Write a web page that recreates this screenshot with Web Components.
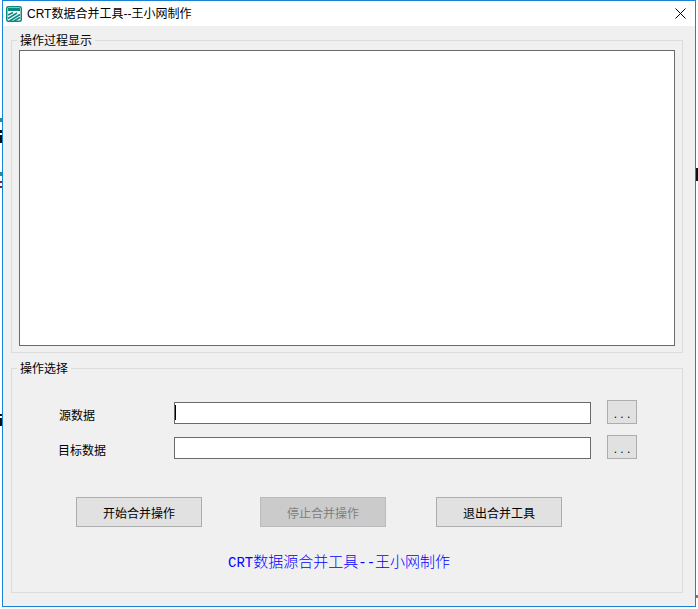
<!DOCTYPE html>
<html lang="zh">
<head>
<meta charset="utf-8">
<title>CRT数据合并工具</title>
<style>
    html, body { margin: 0; height: 100%; background: #fff; }
    body {
        font: 12px "Liberation Sans", "Noto Sans CJK SC", sans-serif;
        color: #000;
        overflow: hidden;
    }
</style>
</head>
<body>
<desktop-scraps></desktop-scraps>
<app-window>
    <title-bar>CRT数据合并工具--王小网制作</title-bar>
    <group-box label="操作过程显示" class="log">
        <text-field multiline></text-field>
    </group-box>
    <group-box label="操作选择" class="pick">
        <field-row label="源数据" focused></field-row>
        <field-row label="目标数据"></field-row>
        <action-row>
            <win-button>开始合并操作</win-button>
            <win-button disabled>停止合并操作</win-button>
            <win-button>退出合并工具</win-button>
        </action-row>
        <credit-line></credit-line>
    </group-box>
</app-window>

<script>
// bits of the desktop that stick out beside the window
class DesktopScraps extends HTMLElement {
    constructor() {
        super();
        this.attachShadow({mode: "open"});
        const bits = [
            [0, 118, 2, 4, "#1a8f96"],
            [0, 130, 2, 3, "#111"],
            [0, 135, 2, 8, "#111"],
            [0, 172, 2, 4, "#1a8f96"],
            [0, 181, 2, 2, "#8a2030"],
            [0, 186, 2, 2, "#8a2030"],
            [0, 414, 2, 2, "#111"],
            [0, 418, 2, 8, "#111"],
            [696, 168, 2, 13, "#111"],
            [696, 595, 2, 3, "#777"]
        ];
        this.shadowRoot.innerHTML = /* html */`
        <style>
            :host { display: block; position: absolute; inset: 0; }
            i { position: absolute; }
        </style>
        ${bits.map(([x, y, w, h, c]) =>
            `<i style="left:${x}px;top:${y}px;width:${w}px;height:${h}px;background:${c}"></i>`).join("")}
        `;
    }
}

class AppWindow extends HTMLElement {
    constructor() {
        super();
        this.attachShadow({mode: "open"});
        this.shadowRoot.innerHTML = /* html */`
        <style>
            :host {
                display: flex;
                flex-direction: column;
                position: relative;
                box-sizing: border-box;
                width: 694px;
                height: 607px;
                margin-left: 2px;
                border: 1px solid #1883d7;
                background: #f0f0f0;
            }
            .body {
                flex: 1;
                display: flex;
                flex-direction: column;
                gap: 15px;
                padding: 14px 12px 13px 8px;
            }
        </style>
        <slot name="bar"></slot>
        <div class="body"><slot></slot></div>
        `;
    }

    connectedCallback() {
        const bar = this.querySelector("title-bar");
        if (bar) bar.slot = "bar";
    }
}

class TitleBar extends HTMLElement {
    constructor() {
        super();
        this.attachShadow({mode: "open"});
        this.shadowRoot.innerHTML = /* html */`
        <style>
            :host {
                display: flex;
                align-items: center;
                height: 25px;
                background: #fff;
                font-size: 12px;
            }
            .icon { margin: 0 5px 0 3px; flex: none; }
            .text { flex: 1; position: relative; top: -1px; }
            .close { margin-right: 9px; flex: none; }
        </style>
        <svg class="icon" width="16" height="16" viewBox="0 0 16 16">
            <rect x=".75" y=".75" width="14.5" height="14.5" rx="1.5" fill="#fff" stroke="#0b8a82" stroke-width="1.5"/>
            <rect x="2" y="2" width="12" height="3" fill="#0b8a82"/>
            <path d="M2 9 L7 6.5 M2 12.5 L11 7 M3.5 15 L14 8.5 M8 15 L14 11.5" stroke="#0b8a82" stroke-width="1.6" fill="none"/>
        </svg>
        <span class="text"><slot></slot></span>
        <svg class="close" width="11" height="11" viewBox="0 0 11 11">
            <path d="M.5 .5 L10.5 10.5 M10.5 .5 L.5 10.5" stroke="#000" stroke-width="1" fill="none"/>
        </svg>
        `;
    }
}

class GroupBox extends HTMLElement {
    constructor() {
        super();
        this.attachShadow({mode: "open"});
        this.shadowRoot.innerHTML = /* html */`
        <style>
            :host {
                display: flex;
                flex-direction: column;
                position: relative;
                box-sizing: border-box;
                border: 1px solid #dcdcdc;
            }
            :host(.log) { height: 313px; padding: 9px 7px 6px; }
            :host(.pick) { height: 225px; padding: 31px 0 0 46px; }
            .legend {
                position: absolute;
                top: -8px;
                left: 5px;
                padding: 0 3px;
                background: #f0f0f0;
                line-height: 16px;
            }
        </style>
        <span class="legend"></span>
        <slot></slot>
        `;
    }

    connectedCallback() {
        this.shadowRoot.querySelector(".legend").textContent = this.getAttribute("label");
    }
}

class TextField extends HTMLElement {
    constructor() {
        super();
        this.attachShadow({mode: "open"});
        this.shadowRoot.innerHTML = /* html */`
        <style>
            :host {
                display: block;
                box-sizing: border-box;
                height: 22px;
                background: #fff;
                border: 1px solid #6a6a6a;
                position: relative;
            }
            :host([multiline]) { flex: 1; height: auto; }
            :host([focused])::before {
                content: "";
                position: absolute;
                left: 0;
                top: 2px;
                width: 1px;
                height: 15px;
                background: #000;
            }
        </style>
        `;
    }
}

class WinButton extends HTMLElement {
    constructor() {
        super();
        this.attachShadow({mode: "open"});
        this.shadowRoot.innerHTML = /* html */`
        <style>
            :host {
                display: flex;
                align-items: center;
                justify-content: center;
                box-sizing: border-box;
                width: 126px;
                height: 30px;
                background: #e1e1e1;
                border: 1px solid #adadad;
                font-size: 12px;
            }
            :host([disabled]) {
                background: #cbcbcb;
                border-color: #bbb;
                color: #808080;
            }
            :host([small]) {
                width: 30px;
                height: 24px;
                align-items: flex-end;
                line-height: 18px;
            }
        </style>
        <slot></slot>
        `;
    }
}

class FieldRow extends HTMLElement {
    constructor() {
        super();
        this.attachShadow({mode: "open"});
        this.shadowRoot.innerHTML = /* html */`
        <style>
            :host {
                display: grid;
                grid-template-columns: 116px 417px 46px;
                align-items: end;
                height: 24px;
                margin-bottom: 11px;
            }
            .name { line-height: 16px; }
            :host([focused]) .name { padding-left: 1px; }
            win-button { margin-left: 16px; }
        </style>
        <span class="name"></span>
        <text-field></text-field>
        <win-button small>. . .</win-button>
        `;
    }

    connectedCallback() {
        this.shadowRoot.querySelector(".name").textContent = this.getAttribute("label");
        if (this.hasAttribute("focused")) {
            this.shadowRoot.querySelector("text-field").setAttribute("focused", "");
        }
    }
}

class ActionRow extends HTMLElement {
    constructor() {
        super();
        this.attachShadow({mode: "open"});
        this.shadowRoot.innerHTML = /* html */`
        <style>
            :host {
                display: flex;
                margin: 27px 0 0 18px;
            }
            ::slotted(win-button:nth-child(2)) { margin: 0 50px 0 58px; }
        </style>
        <slot></slot>
        `;
    }
}

class CreditLine extends HTMLElement {
    constructor() {
        super();
        this.attachShadow({mode: "open"});
        this.shadowRoot.innerHTML = /* html */`
        <style>
            :host {
                display: block;
                margin: 24px 0 0 170px;
                color: #0000ff;
                font: 15px/20px "Noto Sans CJK SC", sans-serif;
                font-weight: 300;
                white-space: nowrap;
            }
            .latin { font: 14px/20px "Liberation Mono", monospace; }
        </style>
        <span class="latin">CRT</span>数据源合并工具<span class="latin">--</span>王小网制作
        `;
    }
}

customElements.define("desktop-scraps", DesktopScraps);
customElements.define("app-window", AppWindow);
customElements.define("title-bar", TitleBar);
customElements.define("group-box", GroupBox);
customElements.define("text-field", TextField);
customElements.define("win-button", WinButton);
customElements.define("field-row", FieldRow);
customElements.define("action-row", ActionRow);
customElements.define("credit-line", CreditLine);
</script>
</body>
</html>
